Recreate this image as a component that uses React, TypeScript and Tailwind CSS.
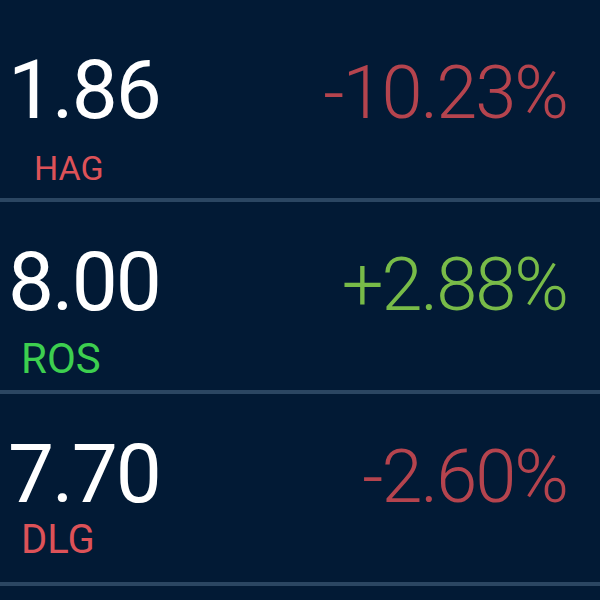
type Quote = {
  price: string;
  change: string;
  ticker: string;
  up: boolean;
  // the tickers in the capture are not quite the same size or offset
  tickerClass: string;
};

const quotes: Quote[] = [
  { price: '1.86', change: '-10.23%', ticker: 'HAG', up: false, tickerClass: 'text-[34px] mt-[28px] ml-[26px]' },
  { price: '8.00', change: '+2.88%', ticker: 'ROS', up: true, tickerClass: 'text-[42px] mt-[23px] ml-[13px]' },
  { price: '7.70', change: '-2.60%', ticker: 'DLG', up: false, tickerClass: 'text-[40px] mt-[13px] ml-[13px]' },
];

function QuoteRow({ quote }: { quote: Quote }) {
  return (
    <div>
      <div className="h-[188px] pt-[50px] pl-[8px] pr-[33px]">
        <div className="flex items-baseline justify-between">
          <span className="text-[82px] leading-[60px] tracking-[-2px] text-white font-normal">{quote.price}</span>
          <span
            className={`text-[74px] leading-[60px] tracking-[-2px] font-light ${quote.up ? 'text-[#78bb48]' : 'text-[#b5444e]'}`}
          >
            {quote.change}
          </span>
        </div>
        <div
          className={`${quote.tickerClass} leading-none ${quote.up ? 'text-[#3dcf4f]' : 'text-[#dd5258]'}`}
        >
          {quote.ticker}
        </div>
      </div>
      <div className="h-1 bg-[#2b4662]" />
    </div>
  );
}

export default function App() {
  return (
    <div
      className="w-[600px] h-[600px] overflow-hidden bg-[#021a35] pt-[10px]"
      style={{ fontFamily: 'Roboto, "Noto Sans", sans-serif' }}
    >
      {quotes.map((q) => (
        <QuoteRow key={q.ticker} quote={q} />
      ))}
    </div>
  );
}
